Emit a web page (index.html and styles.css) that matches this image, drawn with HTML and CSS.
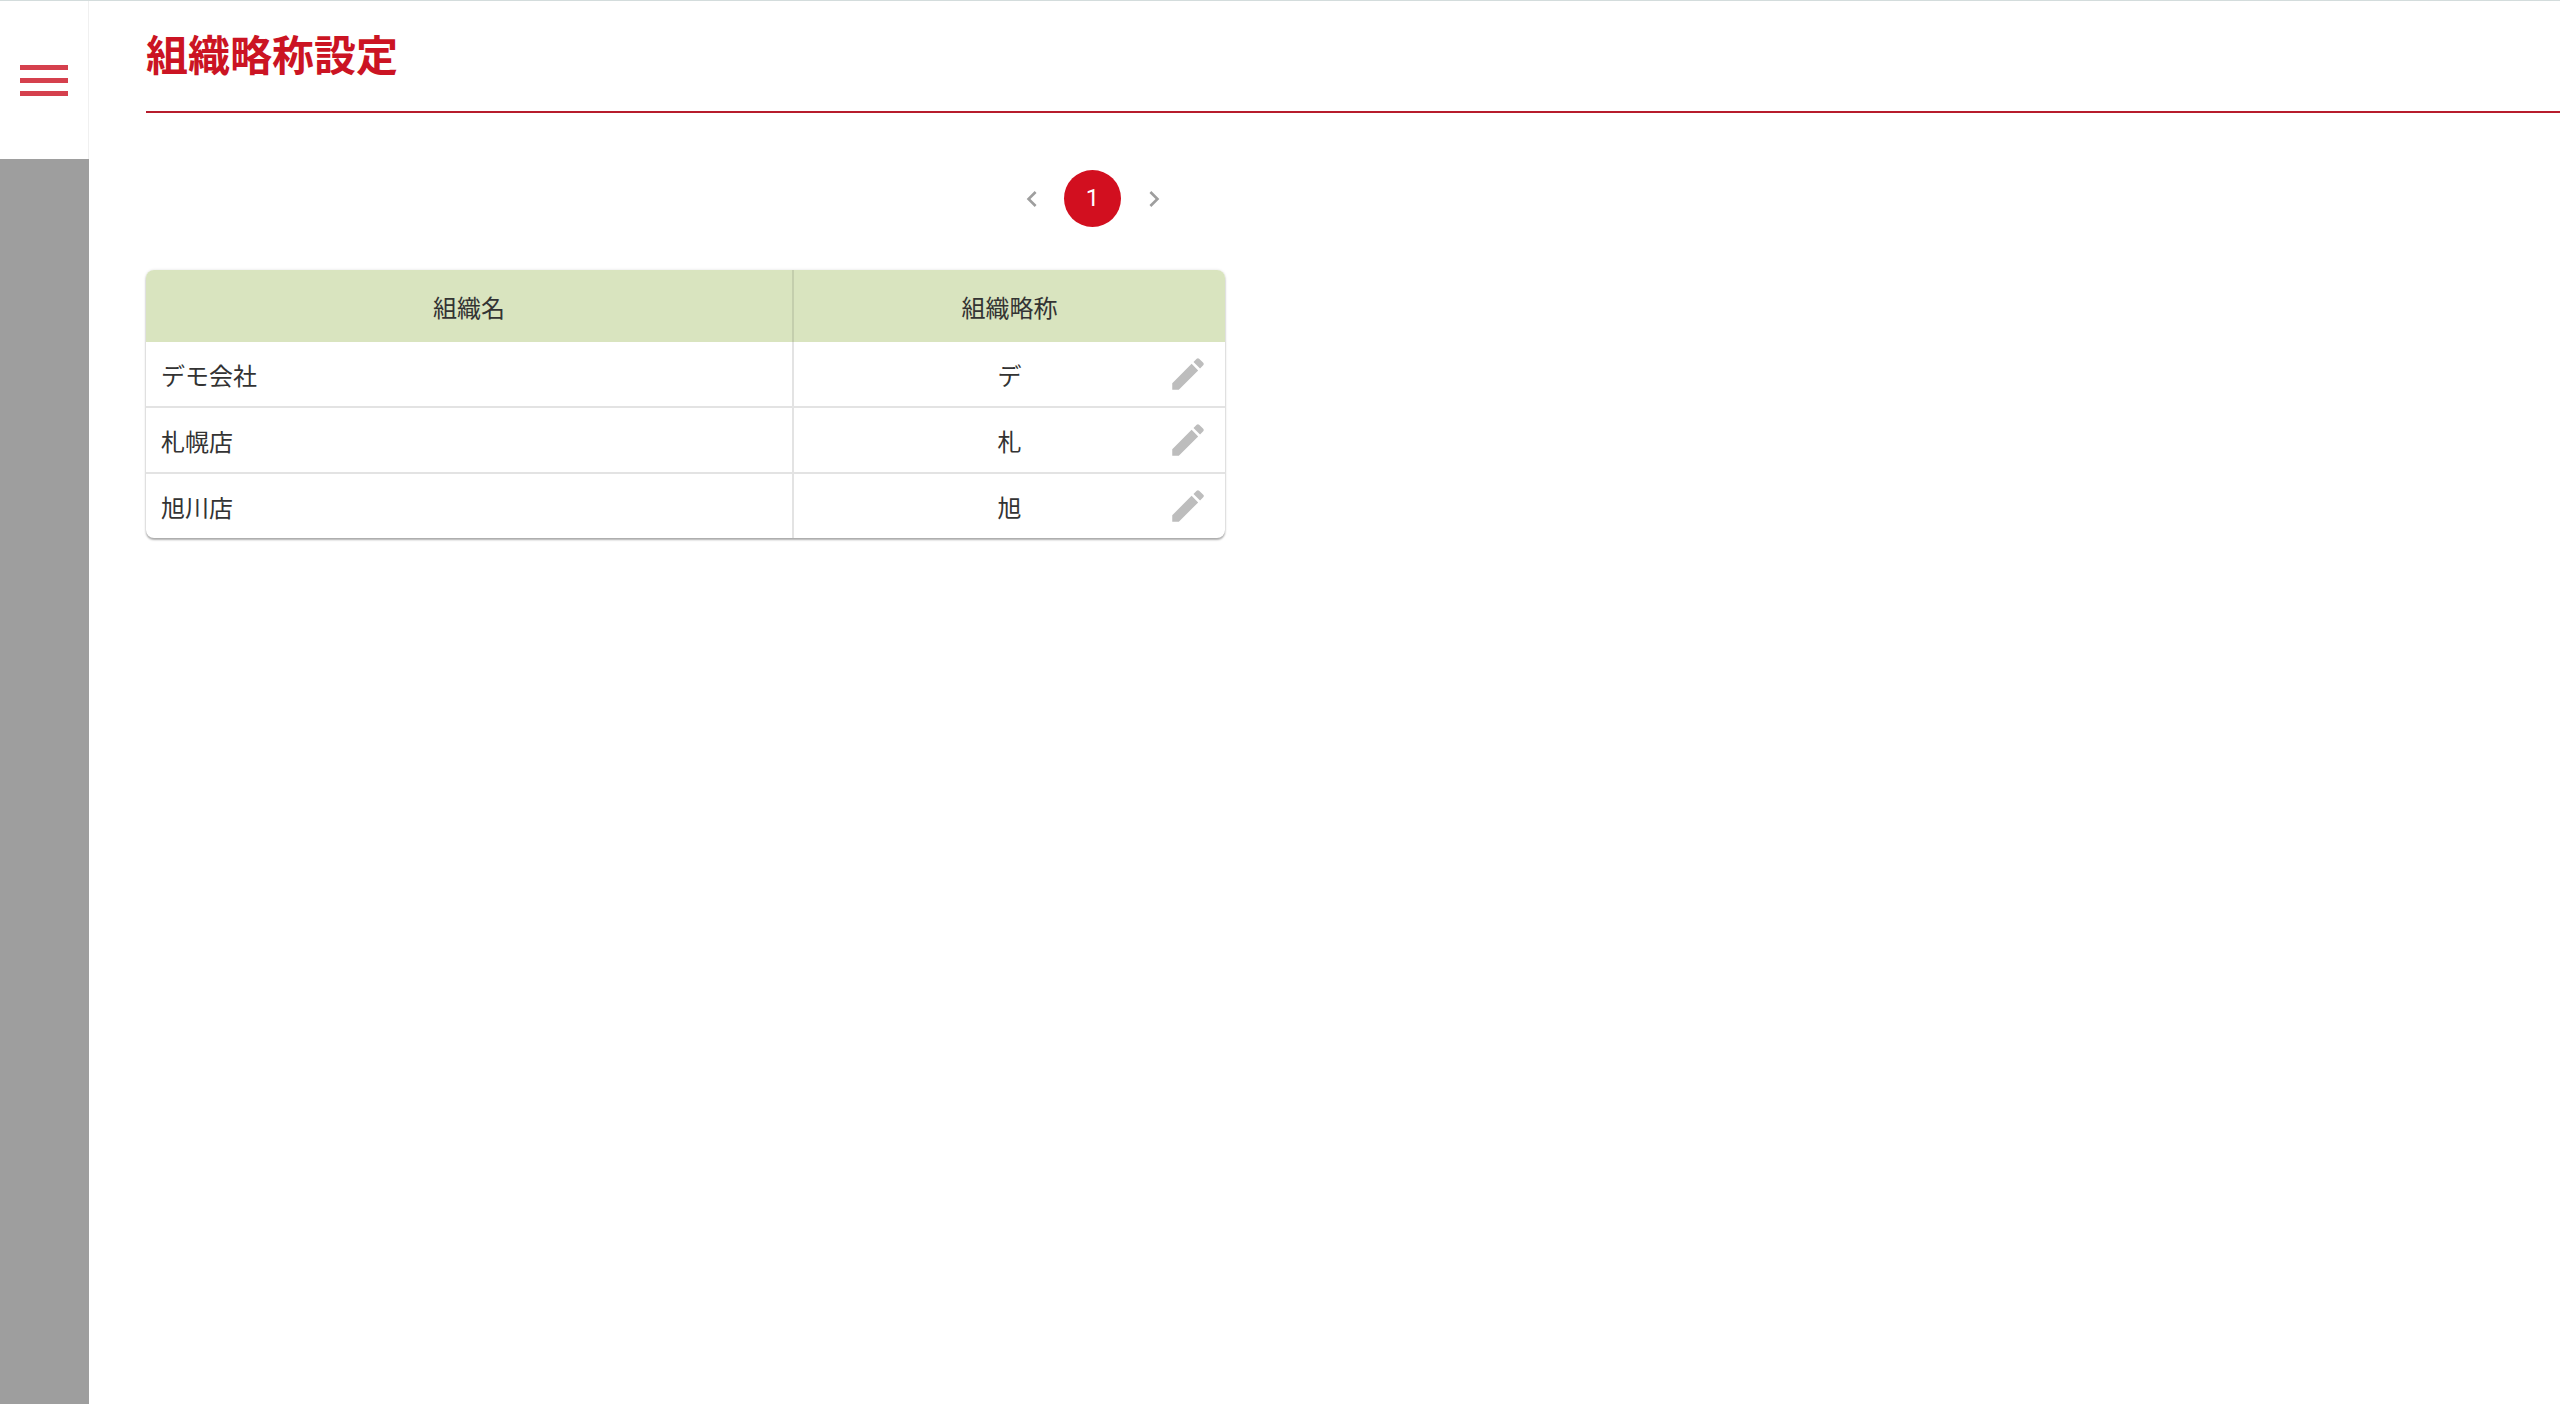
FILE: index.html
```html
<!DOCTYPE html>
<html lang="ja">
<head>
    <meta charset="UTF-8">
    <title>組織略称設定</title>
    <link rel="stylesheet" href="styles.css">
</head>
<body>
    <div class="app">
        <aside class="side">
            <div class="side-top">
                <div class="menu-btn"><span></span><span></span><span></span></div>
            </div>
        </aside>
        <main class="main">
            <h1 class="page-title">組織略称設定</h1>
            <div class="content">
                <div class="pager">
                    <svg class="chev" viewBox="0 0 24 24"><path d="M15.41 7.41 14 6l-6 6 6 6 1.41-1.41L10.83 12z"/></svg>
                    <div class="page-num">1</div>
                    <svg class="chev" viewBox="0 0 24 24"><path d="M10 6 8.59 7.41 13.17 12l-4.58 4.59L10 18l6-6z"/></svg>
                </div>
                <div class="table-wrap">
                    <table class="org-table">
                        <thead>
                            <tr><th class="col-name">組織名</th><th>組織略称</th></tr>
                        </thead>
                        <tbody>
                            <tr>
                                <td>デモ会社</td>
                                <td class="abbr"><span>デ</span>
                                    <svg class="edit" viewBox="0 0 24 24"><path d="M3 17.25V21h3.75L17.81 9.94l-3.75-3.75L3 17.25zM20.71 7.04a1 1 0 0 0 0-1.41l-2.34-2.34a1 1 0 0 0-1.41 0l-1.83 1.83 3.75 3.75 1.83-1.83z"/></svg>
                                </td>
                            </tr>
                            <tr>
                                <td>札幌店</td>
                                <td class="abbr"><span>札</span>
                                    <svg class="edit" viewBox="0 0 24 24"><path d="M3 17.25V21h3.75L17.81 9.94l-3.75-3.75L3 17.25zM20.71 7.04a1 1 0 0 0 0-1.41l-2.34-2.34a1 1 0 0 0-1.41 0l-1.83 1.83 3.75 3.75 1.83-1.83z"/></svg>
                                </td>
                            </tr>
                            <tr>
                                <td>旭川店</td>
                                <td class="abbr"><span>旭</span>
                                    <svg class="edit" viewBox="0 0 24 24"><path d="M3 17.25V21h3.75L17.81 9.94l-3.75-3.75L3 17.25zM20.71 7.04a1 1 0 0 0 0-1.41l-2.34-2.34a1 1 0 0 0-1.41 0l-1.83 1.83 3.75 3.75 1.83-1.83z"/></svg>
                                </td>
                            </tr>
                        </tbody>
                    </table>
                </div>
            </div>
        </main>
    </div>
</body>
</html>
```

FILE: styles.css
```css
html, body {
    margin: 0;
    height: 100%;
}
body {
    font-family: Roboto, "Noto Sans CJK JP", sans-serif;
    color: #333;
    background: white;
}
.app {
    display: flex;
    height: 100%;
    box-sizing: border-box;
    border-top: 1px solid #d3dcdc;
    overflow: hidden;
}
.side {
    width: 89px;
    flex: none;
    background: #9e9e9e;
}
.side-top {
    height: 158px;
    background: white;
    box-shadow: inset -1px 0 0 #f0f0f0;
    display: flex;
    align-items: center;
    justify-content: center;
    padding-bottom: 0;
    padding-right: 1px;
    box-sizing: border-box;
}
.menu-btn {
    display: flex;
    flex-direction: column;
    gap: 8px;
    width: 48px;
}
.menu-btn span {
    height: 5px;
    background: #d5404d;
}
.main {
    flex: 1;
    padding-left: 57px;
    min-width: 0;
}
.page-title {
    margin: 0;
    height: 112px;
    box-sizing: border-box;
    padding-top: 27px;
    border-bottom: 2px solid #b71c2c;
    font-size: 42px;
    line-height: 58px;
    font-weight: 700;
    color: #cb1423;
}
.content {
    width: 1079px;
}
.pager {
    display: flex;
    align-items: center;
    justify-content: flex-end;
    gap: 16px;
    margin-top: 57px;
    padding-right: 55px;
}
.chev {
    width: 32px;
    height: 32px;
    fill: #9e9e9e;
    margin-left: 1px;
}
.page-num {
    width: 57px;
    height: 57px;
    border-radius: 50%;
    background: #d20f1f;
    color: white;
    font-size: 24px;
    line-height: 57px;
    text-align: center;
}
.table-wrap {
    margin-top: 43px;
    border-radius: 8px;
    overflow: hidden;
    background: white;
    box-shadow: 0 2px 2px rgba(0,0,0,0.3), 0 0 3px rgba(0,0,0,0.12);
}
.org-table {
    width: 100%;
    border-collapse: collapse;
    table-layout: fixed;
    font-size: 24px;
}
.org-table th {
    height: 72px;
    padding: 0;
    background: #d9e4bf;
    font-weight: 400;
    text-align: center;
}
.org-table th.col-name {
    width: 646px;
    border-right: 2px solid #c4cead;
}
.org-table td {
    height: 64px;
    padding: 0 0 0 15px;
    border-bottom: 2px solid #e3e3e3;
}
.org-table td:first-child {
    border-right: 2px solid #e3e3e3;
}
.org-table tr:last-child td {
    border-bottom: none;
}
.abbr {
    position: relative;
    text-align: center;
    padding: 0 !important;
}
.edit {
    position: absolute;
    right: 16px;
    top: 50%;
    width: 42px;
    height: 42px;
    margin-top: -21px;
    fill: #bdbdbd;
}
```
